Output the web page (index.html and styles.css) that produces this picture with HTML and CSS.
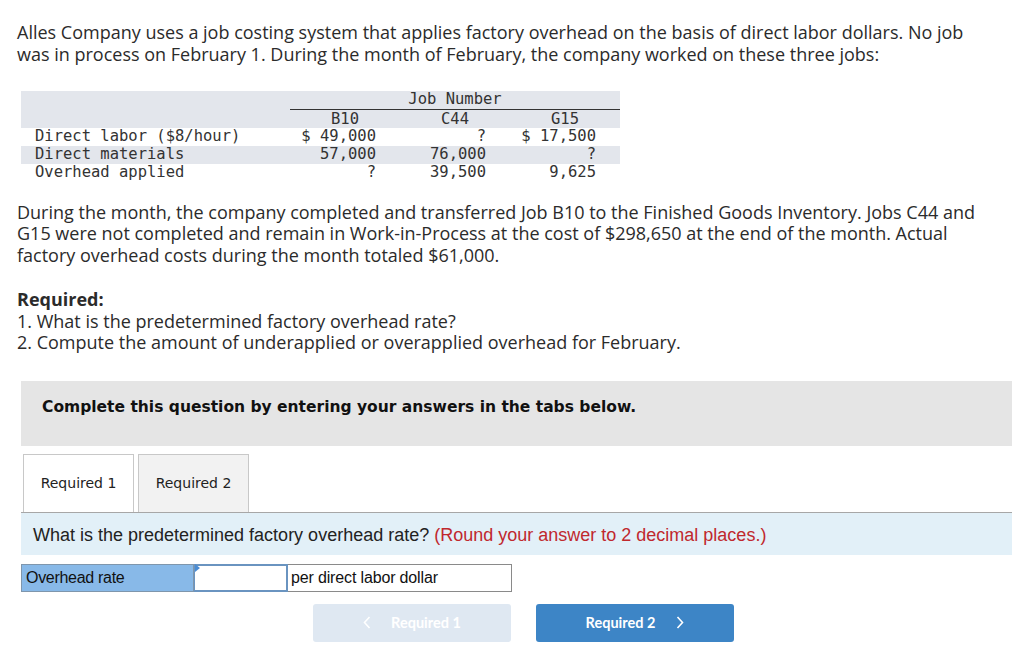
FILE: index.html
```html
<!DOCTYPE html>
<html>
<head>
<meta charset="utf-8">
<link rel="stylesheet" href="styles.css">
</head>
<body>
<div class="page">
  <p class="intro">Alles Company uses a job costing system that applies factory overhead on the basis of direct labor dollars. No job was in process on February 1. During the month of February, the company worked on these three jobs:</p>

  <table class="jobs">
    <thead>
      <tr class="shade">
        <th class="lbl"></th>
        <th colspan="3" class="group">Job Number</th>
      </tr>
      <tr class="shade">
        <th class="lbl"></th>
        <th class="col">B10</th>
        <th class="col">C44</th>
        <th class="col">G15</th>
      </tr>
    </thead>
    <tbody>
      <tr>
        <td class="lbl">Direct labor ($8/hour)</td>
        <td class="num">$ 49,000</td>
        <td class="num">?</td>
        <td class="num">$ 17,500</td>
      </tr>
      <tr class="shade">
        <td class="lbl">Direct materials</td>
        <td class="num">57,000</td>
        <td class="num">76,000</td>
        <td class="num">?</td>
      </tr>
      <tr>
        <td class="lbl">Overhead applied</td>
        <td class="num">?</td>
        <td class="num">39,500</td>
        <td class="num">9,625</td>
      </tr>
    </tbody>
  </table>

  <p class="body">During the month, the company completed and transferred Job B10 to the Finished Goods Inventory. Jobs C44 and G15 were not completed and remain in Work-in-Process at the cost of $298,650 at the end of the month. Actual factory overhead costs during the month totaled $61,000.</p>

  <div class="required">Required:
1. What is the predetermined factory overhead rate?
2. Compute the amount of underapplied or overapplied overhead for February.</div>

  <div class="instruct">Complete this question by entering your answers in the tabs below.</div>

  <div class="tabs">
    <div class="tab active">Required 1</div>
    <div class="tab">Required 2</div>
  </div>

  <div class="question">What is the predetermined factory overhead rate? <span class="hint">(Round your answer to 2 decimal places.)</span></div>

  <div class="answer">
    <div class="a-label">Overhead rate</div>
    <div class="a-input"><span class="flag"></span></div>
    <div class="a-unit">per direct labor dollar</div>
  </div>

  <div class="nav">
    <div class="btn prev"><svg class="chev left" width="8" height="13" viewBox="0 0 8 13"><polyline points="6.5,1 1.5,6.5 6.5,12" fill="none" stroke="#fff" stroke-width="1.6"/></svg>Required 1</div>
    <div class="btn next">Required 2<svg class="chev right" width="8" height="13" viewBox="0 0 8 13"><polyline points="1.5,1 6.5,6.5 1.5,12" fill="none" stroke="#fff" stroke-width="1.6"/></svg></div>
  </div>
</div>
</body>
</html>
```

FILE: styles.css
```css
* { box-sizing: border-box; }
html, body { margin: 0; padding: 0; background: #fff; }
.page {
  padding: 22px 17px 0 17px;
  font-family: "Open Sans", "Liberation Sans", sans-serif;
  color: #2b2b2b;
}
.intro {
  margin: 0;
  max-width: 975px;
  font-size: 18px;
  line-height: 21.5px;
}
.jobs {
  margin: 26px 0 0 4px;
  border-collapse: collapse;
  font-family: "DejaVu Sans Mono", monospace;
  font-size: 15.5px;
  color: #333;
}
.jobs tr { height: 18px; }
.jobs th, .jobs td {
  padding: 0;
  line-height: 17px;
  font-weight: normal;
  white-space: nowrap;
}
.jobs .shade { background: #e3e6ec; }
.jobs .lbl { width: 269px; padding-left: 14px; text-align: left; }
.jobs .group { text-align: center; border-bottom: 1.5px solid #333; height: 18px; }
.jobs .col { width: 110px; text-align: center; padding-top: 1px; }
.jobs .num { text-align: right; padding-right: 24px; }
.body {
  margin: 20px 0 0;
  font-size: 18px;
  line-height: 21.5px;
}
.required {
  margin: 23px 0 0;
  font-size: 18px;
  line-height: 21.5px;
  white-space: pre-line;
}
.required::first-line { font-weight: bold; }
.instruct {
  margin: 27px 0 0 4px;
  width: 991px;
  height: 65px;
  background: #e5e5e5;
  padding: 17px 21px 0;
  font-family: "DejaVu Sans", Verdana, sans-serif;
  font-weight: bold;
  font-size: 15.5px;
  color: #111;
}
.tabs {
  display: flex;
  gap: 4px;
  margin: 8px 0 0 6px;
  height: 58px;
}
.tab {
  width: 111px;
  height: 58px;
  border: 1px solid #c8c8c8;
  border-bottom: none;
  background: #f2f2f2;
  font-family: "DejaVu Sans", Verdana, sans-serif;
  font-size: 14px;
  color: #222;
  display: flex;
  align-items: center;
  justify-content: center;
  padding-bottom: 1px;
}
.tab.active { background: #fff; }
.question {
  margin-left: 4px;
  width: 991px;
  height: 43px;
  background: #e2f0f8;
  border-top: 1px solid #a7a7a7;
  padding: 12px 0 0 12px;
  font-family: "Liberation Sans", Arial, sans-serif;
  font-size: 18px;
  color: #222;
}
.hint { color: #c0282d; }
.answer {
  display: flex;
  margin: 9px 0 0 4px;
  height: 28px;
  font-family: "Liberation Sans", Arial, sans-serif;
  font-size: 16px;
  color: #111;
}
.a-label {
  width: 173px;
  background: #88b9e8;
  border: 1px solid #7f96ac;
  padding: 4px 0 0 4px;
  letter-spacing: -0.3px;
}
.a-input {
  position: relative;
  width: 94px;
  background: #fff;
  border: 2px solid #6a94c0;
  border-left-width: 1px;
}
.flag {
  position: absolute;
  left: 0;
  top: -2px;
  width: 0;
  height: 0;
  border-top: 4px solid transparent;
  border-bottom: 4px solid transparent;
  border-left: 5px solid #4a8cd4;
}
.a-unit {
  width: 224px;
  border: 1px solid #8a8a8a;
  border-left: none;
  padding: 4px 0 0 3px;
  letter-spacing: -0.15px;
}
.nav {
  display: flex;
  gap: 25px;
  margin: 12px 0 0 296px;
}
.btn {
  width: 198px;
  height: 38px;
  border-radius: 3px;
  display: flex;
  align-items: center;
  justify-content: center;
  font-family: "Lato", "Liberation Sans", sans-serif;
  font-weight: bold;
  font-size: 14.5px;
  color: #fff;
}
.prev { background: #dfe8f2; }
.chev.left { margin-right: 20px; }
.next { background: #3d85c6; }
.chev.right { margin-left: 21px; }
```
